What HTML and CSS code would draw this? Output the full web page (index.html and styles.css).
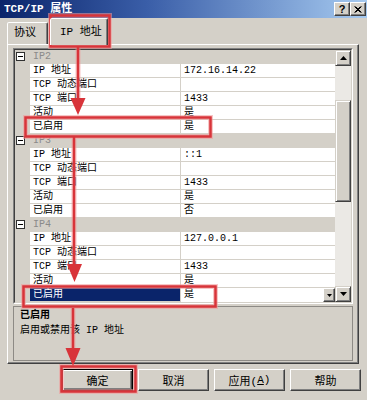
FILE: index.html
```html
<!DOCTYPE html>
<html lang="zh-CN">
<head>
<meta charset="utf-8">
<title>TCP/IP 属性</title>
<link rel="stylesheet" href="styles.css">
</head>
<body>
<div class="dialog">
  <div class="titlebar">
    <span class="title">TCP/IP 属性</span>
    <div class="tb-btns">
      <span class="tb-btn">?</span>
      <span class="tb-btn"><svg width="8" height="7" viewBox="0 0 8 7"><path d="M0.5 0.5L6.5 6.5M1.5 0.5L7.5 6.5M6.5 0.5L0.5 6.5M7.5 0.5L1.5 6.5" stroke="#000" stroke-width="1" fill="none"/></svg></span>
    </div>
  </div>
  <div class="tabs">
    <div class="tab">协议</div>
    <div class="tab active">IP 地址</div>
  </div>
  <div class="panel">
    <div class="grid">
      <div class="grid-in">
        <div class="rows">
          <div class="row cat"><span class="gut"><i class="minus"></i></span><span class="cat-name">IP2</span></div>
          <div class="row"><span class="gut"></span><span class="name">IP 地址</span><span class="val">172.16.14.22</span></div>
          <div class="row"><span class="gut"></span><span class="name">TCP 动态端口</span><span class="val"></span></div>
          <div class="row"><span class="gut"></span><span class="name">TCP 端口</span><span class="val">1433</span></div>
          <div class="row"><span class="gut"></span><span class="name">活动</span><span class="val">是</span></div>
          <div class="row"><span class="gut"></span><span class="name">已启用</span><span class="val">是</span></div>

          <div class="row cat"><span class="gut"><i class="minus"></i></span><span class="cat-name">IP3</span></div>
          <div class="row"><span class="gut"></span><span class="name">IP 地址</span><span class="val">::1</span></div>
          <div class="row"><span class="gut"></span><span class="name">TCP 动态端口</span><span class="val"></span></div>
          <div class="row"><span class="gut"></span><span class="name">TCP 端口</span><span class="val">1433</span></div>
          <div class="row"><span class="gut"></span><span class="name">活动</span><span class="val">是</span></div>
          <div class="row"><span class="gut"></span><span class="name">已启用</span><span class="val">否</span></div>

          <div class="row cat"><span class="gut"><i class="minus"></i></span><span class="cat-name">IP4</span></div>
          <div class="row"><span class="gut"></span><span class="name">IP 地址</span><span class="val">127.0.0.1</span></div>
          <div class="row"><span class="gut"></span><span class="name">TCP 动态端口</span><span class="val"></span></div>
          <div class="row"><span class="gut"></span><span class="name">TCP 端口</span><span class="val">1433</span></div>
          <div class="row"><span class="gut"></span><span class="name">活动</span><span class="val">是</span></div>
          <div class="row sel"><span class="gut"></span><span class="name">已启用</span><span class="val"><span>是</span><span class="dd"><svg width="5" height="3" viewBox="0 0 5 3"><polygon points="0,0 5,0 2.5,3" fill="#000"/></svg></span></span></div>
        </div>
        <div class="scroll">
          <div class="sb-btn"><svg width="7" height="4" viewBox="0 0 7 4"><polygon points="3.5,0 7,4 0,4" fill="#000"/></svg></div>
          <div class="sb-track t1"></div>
          <div class="sb-thumb"></div>
          <div class="sb-track t2"></div>
          <div class="sb-btn"><svg width="7" height="4" viewBox="0 0 7 4"><polygon points="0,0 7,0 3.5,4" fill="#000"/></svg></div>
        </div>
      </div>
    </div>
    <div class="desc">
      <b>已启用</b>
      <p>启用或禁用该 IP 地址</p>
    </div>
  </div>
  <div class="buttons">
    <div class="btn default">确定</div>
    <div class="btn">取消</div>
    <div class="btn">应用(<u>A</u>)</div>
    <div class="btn">帮助</div>
  </div>
</div>
<svg class="annot" width="367" height="400" viewBox="0 0 367 400">
  <g fill="none" stroke="#f29a9a" stroke-width="5" opacity="0.55">
    <rect x="50.5" y="15.5" width="59" height="31"/>
    <rect x="25.5" y="117.5" width="185" height="19"/>
    <rect x="23.5" y="286.5" width="192" height="20"/>
    <rect x="61.5" y="366.5" width="74" height="25"/>
    <path d="M78 47V100M74 137V266M73 308V350"/>
  </g>
  <g fill="none" stroke="#d8343a" stroke-width="2.5">
    <rect x="50.5" y="15.5" width="59" height="31"/>
    <rect x="25.5" y="117.5" width="185" height="19"/>
    <rect x="23.5" y="286.5" width="192" height="20"/>
    <rect x="61.5" y="366.5" width="74" height="25"/>
    <path d="M78 47V100M74 137V266M73 308V350"/>
  </g>
  <g fill="#d8343a">
    <polygon points="70.5,98 85.5,98 78,115"/>
    <polygon points="67,264 82,264 74.5,282"/>
    <polygon points="65.5,348 80.5,348 73,366"/>
  </g>
</svg>
</body>
</html>
```

FILE: styles.css
```css
* {
  box-sizing: border-box;
  margin: 0;
  padding: 0;
}

html, body {
  width: 367px;
  height: 400px;
  overflow: hidden;
}

body {
  position: relative;
  background: #d4d0c8;
  font-family: "Liberation Mono", "Noto Sans CJK SC", monospace;
  font-size: 10px;
  color: #000;
}

.dialog {
  height: 400px;
}

/* title bar */
.titlebar {
  height: 18px;
  background: linear-gradient(90deg, #0a246a 0%, #3a5ea8 40%, #a6caf0 100%);
  display: flex;
  align-items: center;
  justify-content: space-between;
  padding: 0 1px 0 4px;
}

.title {
  color: #fff;
  font-weight: bold;
  font-size: 11px;
  line-height: 18px;
}

.tb-btns {
  display: flex;
}

.tb-btn {
  width: 16px;
  height: 14px;
  background: #d4d0c8;
  border: 1px solid;
  border-color: #fff #404040 #404040 #fff;
  box-shadow: inset -1px -1px #808080;
  display: flex;
  align-items: center;
  justify-content: center;
  font: bold 11px/1 "Liberation Sans", sans-serif;
}

/* tabs */
.tabs {
  height: 26px;
  display: flex;
  align-items: flex-end;
  padding-left: 7px;
  position: relative;
  z-index: 1;
}

.tab {
  height: 22px;
  width: 41px;
  padding-left: 6px;
  line-height: 20px;
  font-size: 11px;
  border: 1px solid;
  border-bottom: none;
  border-color: #fff #404040 transparent #fff;
  box-shadow: inset -1px 0 #808080;
  border-radius: 2px 2px 0 0;
  background: #d4d0c8;
}

.tab.active {
  height: 27px;
  width: 58px;
  margin-left: 2px;
  margin-bottom: -1px;
  padding-left: 9px;
  padding-top: 3px;
}

/* panel */
.panel {
  height: 320px;
  margin: 0 8px 0 7px;
  border: 1px solid;
  border-color: #fff #404040 #404040 #fff;
  box-shadow: inset -1px -1px #808080;
  padding: 3px 5px 2px 5px;
}

.grid {
  height: 256px;
  border: 1px solid;
  border-color: #808080 #fff #fff #808080;
}

.grid-in {
  height: 100%;
  border: 1px solid;
  border-color: #404040 #d4d0c8 #d4d0c8 #404040;
  display: flex;
  background: #fff;
}

.rows {
  flex: 1;
}

.row {
  display: grid;
  grid-template-columns: 15px 151px 154px;
  height: 14px;
  line-height: 13px;
}

.gut {
  background: #d4d0c8;
  position: relative;
}

.minus {
  position: absolute;
  left: 1px;
  top: 2px;
  width: 9px;
  height: 9px;
  border: 1px solid #303030;
  background: #fff;
}

.minus::after {
  content: "";
  position: absolute;
  left: 1px;
  top: 3px;
  width: 5px;
  height: 1px;
  background: #000;
}

.name, .val {
  border-bottom: 1px solid #d4d0c8;
  padding-left: 3px;
  white-space: nowrap;
  overflow: hidden;
}

.name {
  border-right: 1px solid #d4d0c8;
}

.cat .cat-name {
  grid-column: span 2;
  background: #d4d0c8;
  color: #8a8a8a;
  padding-left: 3px;
}

.sel .name {
  background: #0a246a;
  color: #fff;
}

.sel .val {
  display: flex;
  justify-content: space-between;
  border-bottom: none;
}

.dd {
  width: 12px;
  height: 14px;
  background: #d4d0c8;
  border: 1px solid;
  border-color: #fff #404040 #404040 #fff;
  box-shadow: inset -1px -1px #808080;
  display: flex;
  align-items: center;
  justify-content: center;
}

/* scrollbar */
.scroll {
  width: 16px;
  display: flex;
  flex-direction: column;
}

.sb-btn, .sb-thumb {
  background: #d4d0c8;
  border: 1px solid;
  border-color: #d4d0c8 #404040 #404040 #d4d0c8;
  box-shadow: inset 1px 1px #fff, inset -1px -1px #808080;
}

.sb-btn {
  height: 16px;
  display: flex;
  align-items: center;
  justify-content: center;
}

.sb-track {
  background: #ebe9e5;
}

.t1 {
  height: 34px;
}

.sb-thumb {
  height: 102px;
}

.t2 {
  flex: 1;
}

/* description */
.desc {
  margin-top: 2px;
  height: 55px;
  border: 1px solid #8d8a85;
  padding: 1px 6px;
  line-height: 15px;
}

.desc b {
  display: block;
}

/* buttons */
.buttons {
  display: flex;
  justify-content: flex-end;
  gap: 5px;
  padding: 5px 6px 0 0;
}

.btn {
  width: 71px;
  height: 22px;
  background: #d4d0c8;
  border: 1px solid;
  border-color: #fff #404040 #404040 #fff;
  box-shadow: inset -1px -1px #808080;
  font-size: 11px;
  display: flex;
  align-items: center;
  justify-content: center;
}

.btn.default {
  border-color: #000;
  box-shadow: inset 1px 1px #fff, inset -1px -1px #404040, inset -2px -2px #808080;
}

/* annotations drawn over the dialog */
.annot {
  position: absolute;
  left: 0;
  top: 0;
  pointer-events: none;
}
```
